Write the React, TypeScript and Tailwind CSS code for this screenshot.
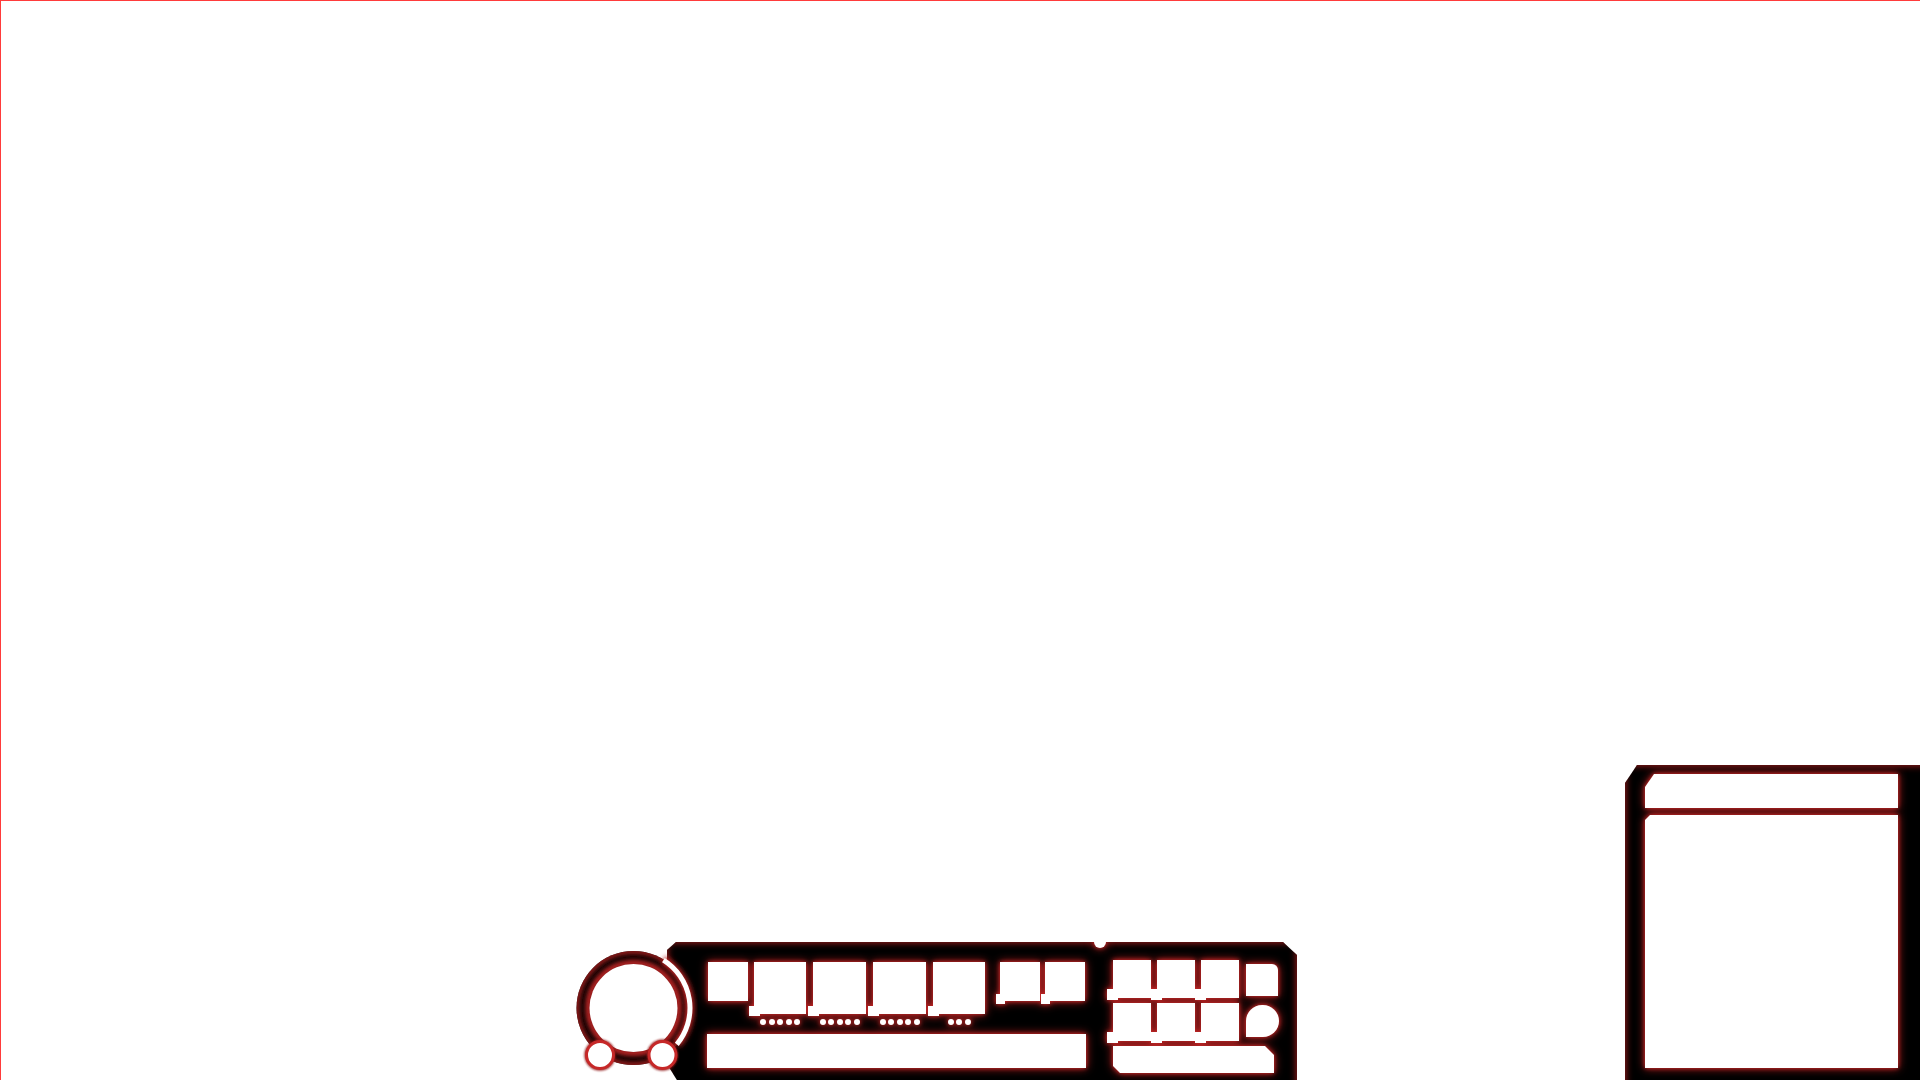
import React from 'react';

const glow = '[filter:drop-shadow(0_0_2px_#d02a2a)_drop-shadow(0_0_4px_#a51d1d)]';

function Ring() {
    return (
        <svg width="124" height="128" viewBox="0 0 124 128" className="relative z-10 mb-[6px] shrink-0">
            <defs>
                <filter id="rg" x="-30%" y="-30%" width="160%" height="160%">
                    <feGaussianBlur stdDeviation="2.5" />
                </filter>
                <filter id="rs" x="-30%" y="-30%" width="160%" height="160%">
                    <feGaussianBlur stdDeviation="1" />
                </filter>
                <clipPath id="rc">
                    <circle cx="59.5" cy="62" r="57" />
                </clipPath>
            </defs>
            <circle cx="59.5" cy="62" r="57" fill="#000" />
            <g clipPath="url(#rc)">
                <circle cx="59.5" cy="62" r="57" fill="none" stroke="#a01c1c" strokeWidth="6" filter="url(#rg)" />
                <circle cx="59.5" cy="62" r="45" fill="none" stroke="#cc2626" strokeWidth="6" filter="url(#rg)" />
            </g>
            <path d="M89.4 14.1 A56.5 56.5 0 0 1 102.8 98.3" fill="none" stroke="#b52020" strokeWidth="9" filter="url(#rg)" />
            <circle cx="59.5" cy="62" r="44" fill="#fff" />
            <path d="M89.4 14.1 A56.5 56.5 0 0 1 102.8 98.3" fill="none" stroke="#fff" strokeWidth="5" />

            {/* small sockets */}
            <circle cx="26" cy="109" r="14" fill="none" stroke="#8e1818" strokeWidth="3" filter="url(#rs)" />
            <circle cx="88.5" cy="109" r="14" fill="none" stroke="#8e1818" strokeWidth="3" filter="url(#rs)" />
            <circle cx="26" cy="109" r="13.5" fill="#fff" stroke="#c62828" strokeWidth="3" />
            <circle cx="88.5" cy="109" r="13.5" fill="#fff" stroke="#c62828" strokeWidth="3" />
        </svg>
    );
}

function Ability({ width, dots }: { width: string; dots: number }) {
    return (
        <div className="flex flex-col items-center">
            <div className={`relative ${width} h-[52px] bg-white`}>
                <div className="absolute -left-[5px] -bottom-[2px] w-[11px] h-[10px] bg-white" />
            </div>
            <div className="flex gap-[2.5px] mt-[5px]">
                {Array.from({ length: dots }).map((_, i) => (
                    <div key={i} className="w-[6px] h-[6px] rounded-full bg-white" />
                ))}
            </div>
        </div>
    );
}

function ItemSlot() {
    return (
        <div className="relative w-[38px] h-[38px] bg-white">
            <div className="absolute -left-[6px] -bottom-[2px] w-[11px] h-[11px] bg-white" />
        </div>
    );
}

export default function App() {
    return (
        <div className="w-[1920px] h-[1080px] bg-white border-t border-l border-[#ff3b3b] overflow-hidden flex items-end">
            {/* Center HUD */}
            <div className="flex items-end ml-[573px]">
                <Ring />

                <div className="relative -ml-[31px] -mb-[10px] w-[630px] h-[148px] shrink-0 bg-black shadow-[inset_0_0_7px_1px_#a01c1c] [clip-path:polygon(9px_0,616px_0,630px_13px,630px_100%,16px_100%,0_122px,0_8px)]">
                    <div className={`relative flex pl-[41px] ${glow}`}>
                        {/* notch */}
                        <div className="absolute left-[427px] -top-[6px] w-[12px] h-[12px] rounded-full bg-white" />

                        {/* Abilities */}
                        <div className="flex flex-col pt-[20px] w-[378px]">
                            <div className="flex items-start h-[72px]">
                                <div className="w-[40px] h-[39px] bg-white" />
                                <div className="flex gap-[7px] ml-[6px]">
                                    <Ability width="w-[52px]" dots={5} />
                                    <Ability width="w-[53px]" dots={5} />
                                    <Ability width="w-[53px]" dots={5} />
                                    <Ability width="w-[52px]" dots={3} />
                                </div>
                                <div className="relative ml-[15px] w-[40px] h-[39px] bg-white">
                                    <div className="absolute -left-[4px] -bottom-[3px] w-[9px] h-[10px] bg-white" />
                                </div>
                                <div className="relative ml-[5px] w-[40px] h-[39px] bg-white">
                                    <div className="absolute -left-[4px] -bottom-[3px] w-[9px] h-[10px] bg-white" />
                                </div>
                            </div>
                            <div className="-ml-[1px] w-[379px] h-[34px] bg-white" />
                        </div>

                        {/* Items */}
                        <div className="flex flex-col pt-[18px] ml-[27px]">
                            <div className="flex gap-[7px]">
                                <div className="grid grid-cols-3 gap-x-[6px] gap-y-[5px]">
                                    <ItemSlot />
                                    <ItemSlot />
                                    <ItemSlot />
                                    <ItemSlot />
                                    <ItemSlot />
                                    <ItemSlot />
                                </div>
                                <div className="flex flex-col">
                                    <div className="mt-[4px] w-[32px] h-[32px] bg-white rounded-tr-[6px]" />
                                    <div className="mt-[9px] w-[33px] h-[32px] bg-white rounded-tl-full rounded-tr-full rounded-br-full rounded-bl-[3px]" />
                                </div>
                            </div>
                            <div className="mt-[5px] w-[161px] h-[27px] bg-white [clip-path:polygon(0_0,152px_0,100%_9px,100%_100%,7px_100%,0_20px)]" />
                        </div>
                    </div>
                </div>
            </div>

            {/* Right panel */}
            <div className="ml-auto -mr-[10px] -mb-[10px] w-[305px] h-[325px] shrink-0 bg-black shadow-[inset_0_0_7px_1px_#a01c1c] [clip-path:polygon(12px_0,100%_0,100%_100%,0_100%,0_18px)] pl-[20px] pt-[9px]">
                <div className={`flex flex-col gap-[7px] ${glow}`}>
                    <div className="w-[253px] h-[34px] bg-white [clip-path:polygon(9px_0,100%_0,100%_100%,0_100%,0_13px)]" />
                    <div className="w-[253px] h-[253px] bg-white [clip-path:polygon(5px_0,100%_0,100%_100%,0_100%,0_5px)]" />
                </div>
            </div>
        </div>
    );
}
